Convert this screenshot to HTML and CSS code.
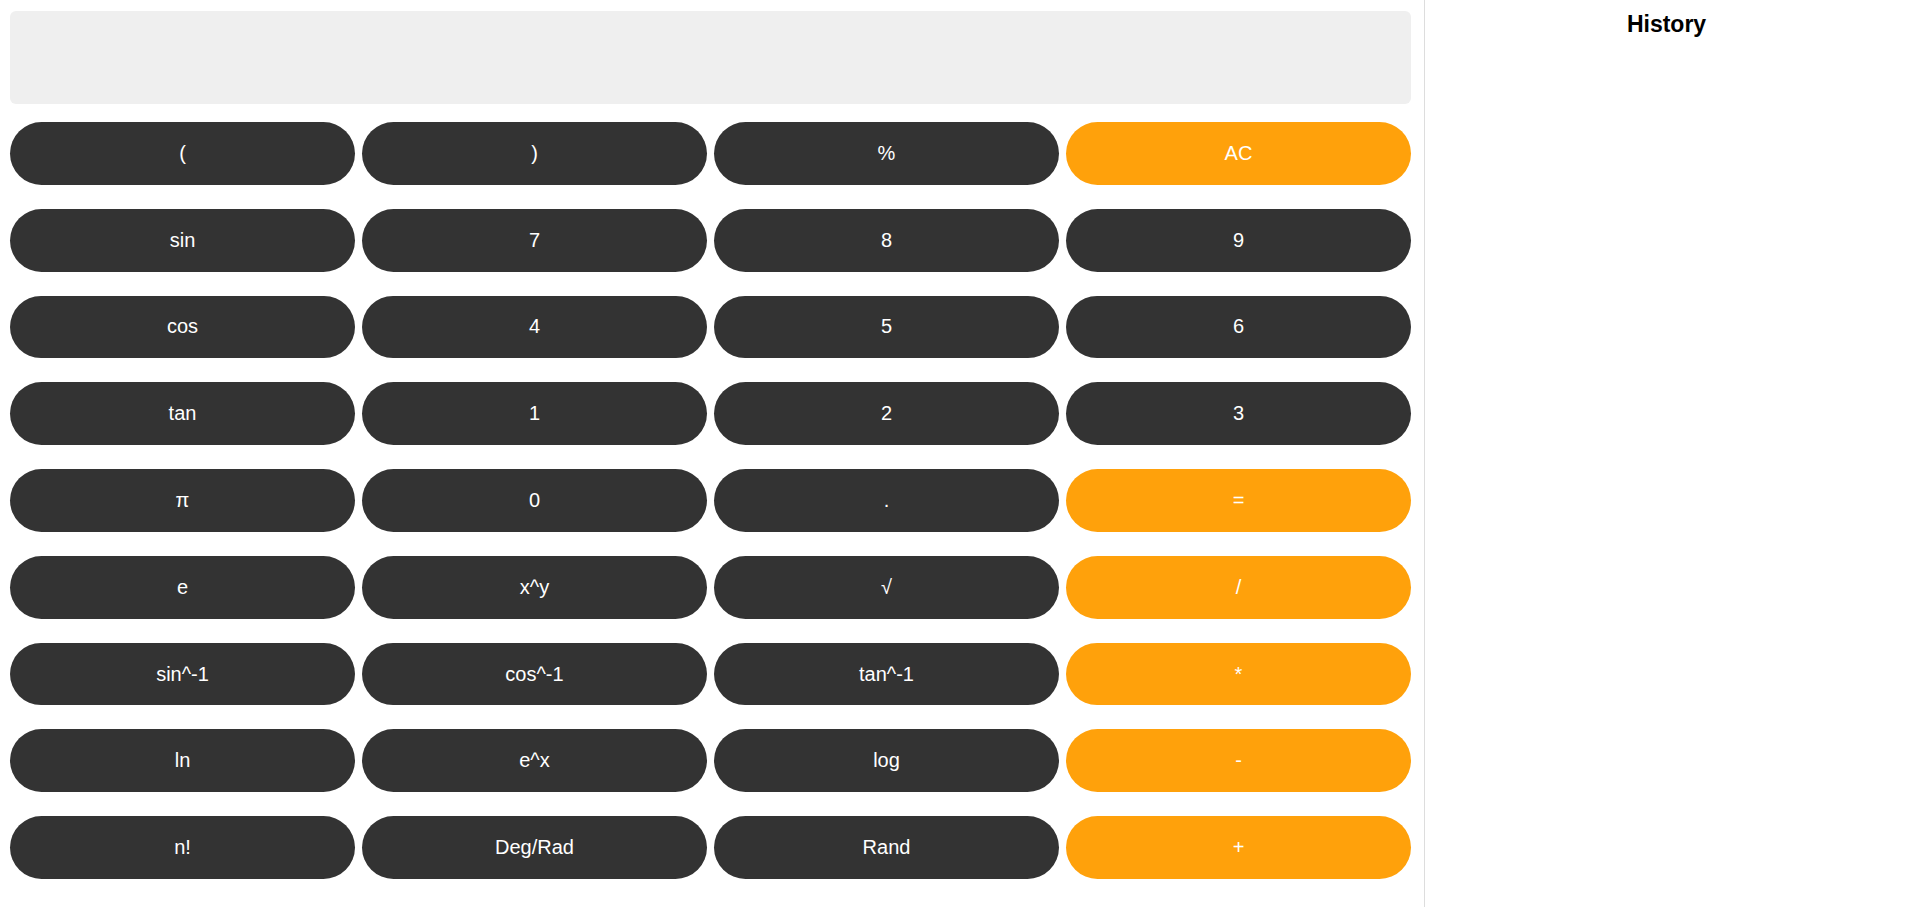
FILE: index.html
```html
<!DOCTYPE html>
<html>
<head>
<meta charset="utf-8">
<title>Calculator</title>
<link rel="stylesheet" href="styles.css">
</head>
<body>
<div class="app">
  <div class="calc">
    <div class="display"></div>
    <div class="keys">
      <button class="key">(</button>
      <button class="key">)</button>
      <button class="key">%</button>
      <button class="key op">AC</button>
      <button class="key">sin</button>
      <button class="key">7</button>
      <button class="key">8</button>
      <button class="key">9</button>
      <button class="key">cos</button>
      <button class="key">4</button>
      <button class="key">5</button>
      <button class="key">6</button>
      <button class="key">tan</button>
      <button class="key">1</button>
      <button class="key">2</button>
      <button class="key">3</button>
      <button class="key">π</button>
      <button class="key">0</button>
      <button class="key">.</button>
      <button class="key op">=</button>
      <button class="key">e</button>
      <button class="key">x^y</button>
      <button class="key">√</button>
      <button class="key op">/</button>
      <button class="key">sin^-1</button>
      <button class="key">cos^-1</button>
      <button class="key">tan^-1</button>
      <button class="key op">*</button>
      <button class="key">ln</button>
      <button class="key">e^x</button>
      <button class="key">log</button>
      <button class="key op">-</button>
      <button class="key">n!</button>
      <button class="key">Deg/Rad</button>
      <button class="key">Rand</button>
      <button class="key op">+</button>
    </div>
  </div>
  <div class="history">
    <h2 class="history-title">History</h2>
  </div>
</div>
</body>
</html>
```

FILE: styles.css
```css
html, body {
  margin: 0;
  padding: 0;
  background: #ffffff;
  font-family: "Liberation Sans", Arial, sans-serif;
}

.app {
  display: flex;
  height: 907px;
}

.calc {
  width: 1424px;
  box-sizing: border-box;
  padding: 11px 13px 28px 10px;
  display: flex;
  flex-direction: column;
}

.display {
  height: 93px;
  background: #efefef;
  border-radius: 6px;
  margin-bottom: 18px;
  flex: none;
}

.keys {
  flex: 1;
  display: grid;
  grid-template-columns: repeat(4, 1fr);
  grid-template-rows: repeat(9, 1fr);
  column-gap: 7px;
  row-gap: 24px;
}

.key {
  border: none;
  border-radius: 40px;
  background: #333333;
  color: #ffffff;
  font-family: "Liberation Sans", Arial, sans-serif;
  font-size: 20px;
  padding: 0;
  margin: 0;
  cursor: pointer;
}

.key.op {
  background: #ffa10b;
}

.history {
  flex: 1;
  border-left: 1px solid #dddddd;
  padding: 11px 10px 10px;
  box-sizing: border-box;
}

.history-title {
  margin: 0;
  text-align: center;
  font-size: 23px;
  font-weight: bold;
  color: #000000;
}
```
